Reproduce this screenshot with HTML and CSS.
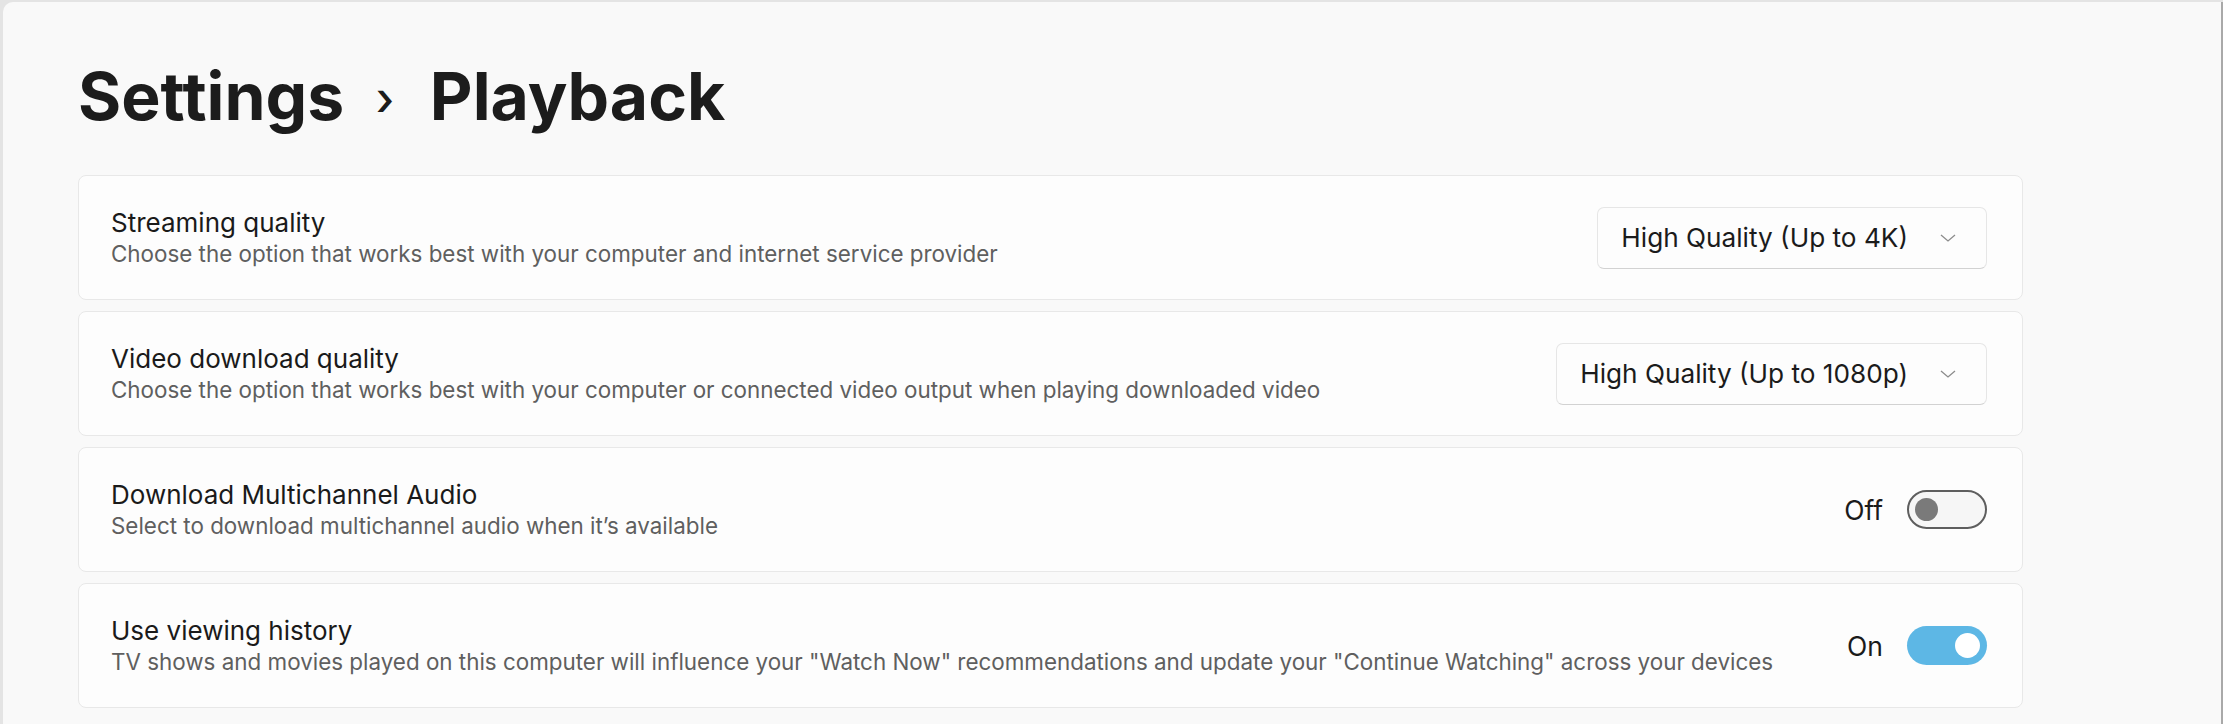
FILE: index.html
```html
<!DOCTYPE html>
<html>

<head>
    <meta charset="utf-8">
    <title>Settings - Playback</title>
    <link rel="stylesheet" href="styles.css">
</head>

<body>

    <div class="window">
        <h1 class="page-title">Settings <span class="crumb-sep">›</span> Playback</h1>

        <div class="settings">

            <div class="setting">
                <div class="setting-text">
                    <div class="setting-name">Streaming quality</div>
                    <div class="setting-desc">Choose the option that works best with your computer and internet service provider</div>
                </div>
                <div class="dropdown">
                    <span>High Quality (Up to 4K)</span>
                    <svg class="chevron" width="16" height="8" viewBox="0 0 16 8">
                        <polyline points="1,1 8,7 15,1" fill="none" stroke="#8c8c8c" stroke-width="1.3" />
                    </svg>
                </div>
            </div>

            <div class="setting">
                <div class="setting-text">
                    <div class="setting-name">Video download quality</div>
                    <div class="setting-desc">Choose the option that works best with your computer or connected video output when playing downloaded video</div>
                </div>
                <div class="dropdown">
                    <span>High Quality (Up to 1080p)</span>
                    <svg class="chevron" width="16" height="8" viewBox="0 0 16 8">
                        <polyline points="1,1 8,7 15,1" fill="none" stroke="#8c8c8c" stroke-width="1.3" />
                    </svg>
                </div>
            </div>

            <div class="setting">
                <div class="setting-text">
                    <div class="setting-name">Download Multichannel Audio</div>
                    <div class="setting-desc">Select to download multichannel audio when it’s available</div>
                </div>
                <div class="switch-wrap">
                    <span class="switch-label">Off</span>
                    <div class="switch"><div class="knob"></div></div>
                </div>
            </div>

            <div class="setting">
                <div class="setting-text">
                    <div class="setting-name">Use viewing history</div>
                    <div class="setting-desc">TV shows and movies played on this computer will influence your "Watch Now" recommendations and update your "Continue Watching" across your devices</div>
                </div>
                <div class="switch-wrap">
                    <span class="switch-label">On</span>
                    <div class="switch on"><div class="knob"></div></div>
                </div>
            </div>

        </div>
    </div>

</body>

</html>
```

FILE: styles.css
```css
html,
body {
    height: 100%;
}

body {
    margin: 0;
    overflow: hidden;
    background-color: #e4e4e4;
    font-family: Inter, "Liberation Sans", sans-serif;
    color: #1b1b1b;
}

.window {
    box-sizing: border-box;
    height: calc(100% - 2px);
    margin: 2px 0 0 3px;
    padding: 54px 0 0 75px;
    background-color: #f9f9f9;
    border-right: 2px solid #a9a9a9;
    border-top-left-radius: 10px;
}

.page-title {
    margin: 0 0 37px 0;
    font-size: 66px;
    line-height: 80px;
    font-weight: 700;
    color: #1c1c1c;
}

.crumb-sep {
    margin: 0 20px 0 16px;
    font-size: 46px;
    font-weight: 500;
    vertical-align: 5px;
}

.settings {
    display: flex;
    flex-direction: column;
    gap: 11px;
    width: 1945px;
}

.setting {
    box-sizing: border-box;
    height: 125px;
    display: flex;
    align-items: center;
    justify-content: space-between;
    padding: 0 35px 0 32px;
    background-color: #fdfdfd;
    border: 1px solid #e8e8e8;
    border-radius: 8px;
}

.setting-text {
    padding-bottom: 2px;
}

.setting-name {
    font-size: 26px;
    line-height: 28px;
    color: #1a1a1a;
}

.setting-desc {
    margin-top: 6px;
    font-size: 22.4px;
    line-height: 22px;
    color: #5f5f5f;
}

.dropdown {
    box-sizing: border-box;
    height: 62px;
    display: flex;
    align-items: center;
    gap: 32px;
    padding: 0 30px 0 23px;
    background-color: #fdfdfd;
    border: 1px solid #e6e6e6;
    border-bottom-color: #d2d2d2;
    border-radius: 7px;
    font-size: 26.2px;
    color: #1b1b1b;
}

.chevron {
    display: block;
}

.switch-wrap {
    display: flex;
    align-items: center;
    gap: 24px;
}

.switch-label {
    font-size: 26.5px;
    color: #1b1b1b;
}

.switch {
    box-sizing: border-box;
    width: 80px;
    height: 39px;
    display: flex;
    align-items: center;
    padding: 0 6px;
    background-color: #f6f6f6;
    border: 2px solid #5e5e5e;
    border-radius: 20px;
}

.switch .knob {
    width: 23px;
    height: 23px;
    border-radius: 50%;
    background-color: #7a7a7a;
}

.switch.on {
    justify-content: flex-end;
    padding: 0 7px;
    background-color: #5db7e5;
    border: none;
}

.switch.on .knob {
    width: 25px;
    height: 25px;
    background-color: #ffffff;
}
```
